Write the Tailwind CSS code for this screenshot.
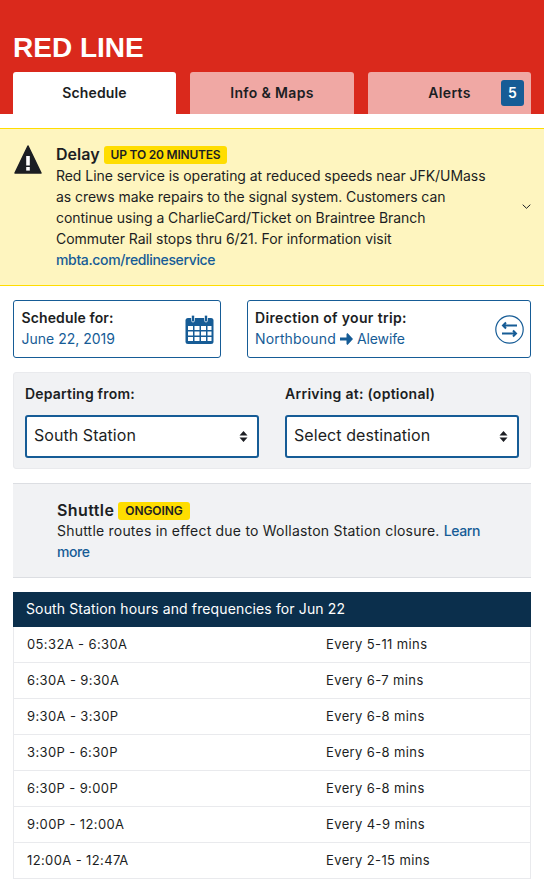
<!DOCTYPE html>
<html lang="en"><head><meta charset="utf-8"><title>Red Line</title>
<script src="https://cdn.jsdelivr.net/npm/@tailwindcss/browser@4"></script></head>
<body class="bg-white font-['Inter','Noto_Sans',sans-serif] text-[14px] leading-[21px] tracking-[0.2px] text-[#1c1e23] overflow-hidden">
<header class="bg-[#da291c] h-[114px] px-[13px] flex flex-col justify-end">
  <h1 class="font-['Liberation_Sans',sans-serif] font-bold text-white text-[28px] leading-[32px] tracking-normal mb-[8px]">RED LINE</h1>
  <nav class="flex gap-[14px] h-[42px] font-semibold tracking-[0.35px]">
    <div class="w-[163px] bg-white rounded-t-[3px] flex items-center justify-center pb-[1px] tracking-[0.15px]">Schedule</div>
    <div class="w-[164px] bg-[#f0a8a4] rounded-t-[3px] flex items-center justify-center pb-[1px]">Info &amp; Maps</div>
    <div class="w-[163px] bg-[#f0a8a4] rounded-t-[3px] flex items-center justify-center relative pb-[1px]">Alerts
      <span class="absolute right-[7px] top-[8px] w-[23px] h-[26px] pb-[2px] bg-[#165c96] text-white rounded-[3px] flex items-center justify-center">5</span></div>
  </nav>
</header>
<section class="mt-[14px] h-[158px] bg-[#fef5bf] border-y border-[#ffdd00] flex pl-[14px] pr-[13px] pt-[15px]">
  <svg class="w-[28px] h-[30px] mt-[1px] shrink-0" viewBox="0 0 28 30"><path d="M14 1 L27 28 H1 Z" fill="#1c1e23" stroke="#1c1e23" stroke-width="1.5" stroke-linejoin="round"/><rect x="12.2" y="11" width="3.6" height="9.5" fill="#fff"/><rect x="12.2" y="22" width="3.6" height="3.6" fill="#fff"/></svg>
  <div class="ml-[14px] w-[440px]">
    <div class="flex items-center h-[21px]"><strong class="text-[16px] font-semibold tracking-[0px]">Delay</strong><span class="ml-[4px] h-[18px] px-[7px] bg-[#ffdd00] rounded-[3px] text-[12px] font-semibold leading-[18px] tracking-[-0.2px]">UP TO 20 MINUTES</span></div>
    <p class="tracking-[-0.05px]">Red Line service is operating at reduced speeds near JFK/UMass as crews make repairs to the signal system. Customers can continue using a CharlieCard/Ticket on Braintree Branch Commuter Rail stops thru 6/21. For information visit <a class="text-[#165c96] font-medium tracking-[-0.35px]">mbta.com/redlineservice</a></p>
  </div>
  <svg class="w-[9px] h-[5px] ml-auto mt-[60px]" viewBox="0 0 9 5"><path d="M.7.7 L4.500 4.300 L8.300.7" fill="none" stroke="#1c1e23" stroke-width="1"/></svg>
</section>
<main class="px-[13px]">
  <div class="mt-[14px] flex justify-between">
    <div class="w-[208px] h-[58px] border border-[#165c96] rounded-[3px] pl-[7.5px] pr-[6px] pt-[6px] flex justify-between items-center">
      <div class="self-start"><div class="font-semibold tracking-[0.12px]">Schedule for:</div><div class="text-[#165c96] tracking-[0px]">June 22, 2019</div></div>
      <svg class="w-[29px] h-[29px] mt-[-6px]" viewBox="0 0 29 29"><rect x="0.5" y="3" width="28" height="26" rx="2.5" fill="#165c96"/><path d="M3 11h5v4H3zM9.500 11h5v4h-5zM16 11h5v4h-5zM22.500 11h4v4h-4zM3 16.500h5v4H3zM9.500 16.500h5v4h-5zM16 16.500h5v4h-5zM22.500 16.500h4v4h-4zM3 22h5v4H3zM9.500 22h5v4h-5zM16 22h5v4h-5zM22.500 22h4v4h-4z" fill="#fff"/><rect x="6.500" y="0" width="3" height="7" rx="1.500" fill="#165c96" stroke="#fff" stroke-width="0.7"/><rect x="19.500" y="0" width="3" height="7" rx="1.500" fill="#165c96" stroke="#fff" stroke-width="0.7"/></svg>
    </div>
    <div class="w-[284px] h-[58px] border border-[#165c96] rounded-[3px] pl-[7px] pr-[6px] pt-[6px] flex justify-between items-center">
      <div class="self-start"><div class="font-semibold tracking-[0.35px]">Direction of your trip:</div><div class="text-[#165c96] flex items-center tracking-[0.15px]">Northbound<svg class="w-[13px] h-[12px] ml-[4px] mr-[4px]" viewBox="0 0 13 12"><path d="M0 4.500h6.500V1l1-1L13 6l-5.500 6-1-1V7.500H0z" fill="#165c96"/></svg><span class="tracking-[-0.1px]">Alewife</span></div></div>
      <svg class="w-[29px] h-[29px] mt-[-6px]" viewBox="0 0 29 29" fill="none" stroke="#165c96"><circle cx="14.500" cy="14.500" r="13.700" stroke-width="1.200"/><path d="M8 10.500h14M11 7.500l-3 3 3 3M7 18.500h14M18 15.500l3 3-3 3" stroke-width="2"/></svg>
    </div>
  </div>
  <div class="mt-[14px] h-[97px] bg-[#f1f2f4] border border-[#e9eaed] rounded-[3px] px-[11px] pt-[10px] grid grid-cols-[234px_234px] gap-x-[26px]">
    <div><div class="font-semibold tracking-[0.2px]">Departing from:</div>
      <div class="mt-[11px] h-[43px] bg-white border-2 border-[#165c96] rounded-[3px] flex items-center justify-between pl-[7px] pr-[9px] pb-[2px] text-[16px] tracking-[0.05px]">South Station<svg class="w-[9px] h-[11px] mt-[2px]" viewBox="0 0 9 11"><path d="M4.500 0L8.500 4.500H.5zM4.500 11L.5 6.500h8z" fill="#1c1e23"/></svg></div></div>
    <div><div class="font-semibold tracking-[0.27px]">Arriving at: (optional)</div>
      <div class="mt-[11px] h-[43px] bg-white border-2 border-[#165c96] rounded-[3px] flex items-center justify-between pl-[7px] pr-[9px] pb-[2px] text-[16px] tracking-[0.07px]">Select destination<svg class="w-[9px] h-[11px] mt-[2px]" viewBox="0 0 9 11"><path d="M4.500 0L8.500 4.500H.5zM4.500 11L.5 6.500h8z" fill="#1c1e23"/></svg></div></div>
  </div>
  <div class="mt-[14px] h-[95px] bg-[#f1f2f4] border-y border-[#dcdee2] pl-[44px] pr-[44px] pt-[16px]">
    <div class="flex items-center h-[21px]"><strong class="text-[16px] font-semibold tracking-[0.4px]">Shuttle</strong><span class="ml-[4px] h-[18px] px-[7px] bg-[#ffdd00] rounded-[3px] text-[12px] font-semibold leading-[18px] tracking-[-0.1px]">ONGOING</span></div>
    <p class="tracking-[0.21px] -mt-[1px]">Shuttle routes in effect due to Wollaston Station closure. <a class="text-[#165c96] font-medium tracking-[-0.4px]">Learn</a> <a class="text-[#165c96] font-medium tracking-[-0.4px]">more</a></p>
  </div>
  <div class="mt-[14px]">
    <div class="h-[35px] bg-[#0b2f4c] text-white pl-[13px] pb-[2px] flex items-center tracking-[0.13px]">South Station hours and frequencies for Jun 22</div>
    <div class="border-x border-b border-[#e9eaed] text-[13px] tracking-[0.38px]">
      <div class="grid grid-cols-[299px_1fr] h-[36px] pb-[1px] items-center border-b border-[#e9eaed] pl-[13px]"><span>05:32A - 6:30A</span><span>Every 5-11 mins</span></div>
      <div class="grid grid-cols-[299px_1fr] h-[36px] pb-[1px] items-center border-b border-[#e9eaed] pl-[13px]"><span>6:30A - 9:30A</span><span>Every 6-7 mins</span></div>
      <div class="grid grid-cols-[299px_1fr] h-[36px] pb-[1px] items-center border-b border-[#e9eaed] pl-[13px]"><span>9:30A - 3:30P</span><span>Every 6-8 mins</span></div>
      <div class="grid grid-cols-[299px_1fr] h-[36px] pb-[1px] items-center border-b border-[#e9eaed] pl-[13px]"><span>3:30P - 6:30P</span><span>Every 6-8 mins</span></div>
      <div class="grid grid-cols-[299px_1fr] h-[36px] pb-[1px] items-center border-b border-[#e9eaed] pl-[13px]"><span>6:30P - 9:00P</span><span>Every 6-8 mins</span></div>
      <div class="grid grid-cols-[299px_1fr] h-[36px] pb-[1px] items-center border-b border-[#e9eaed] pl-[13px]"><span>9:00P - 12:00A</span><span>Every 4-9 mins</span></div>
      <div class="grid grid-cols-[299px_1fr] h-[35px] pb-[1px] items-center pl-[13px]"><span>12:00A - 12:47A</span><span>Every 2-15 mins</span></div>
    </div>
  </div>
</main>
</body></html>
